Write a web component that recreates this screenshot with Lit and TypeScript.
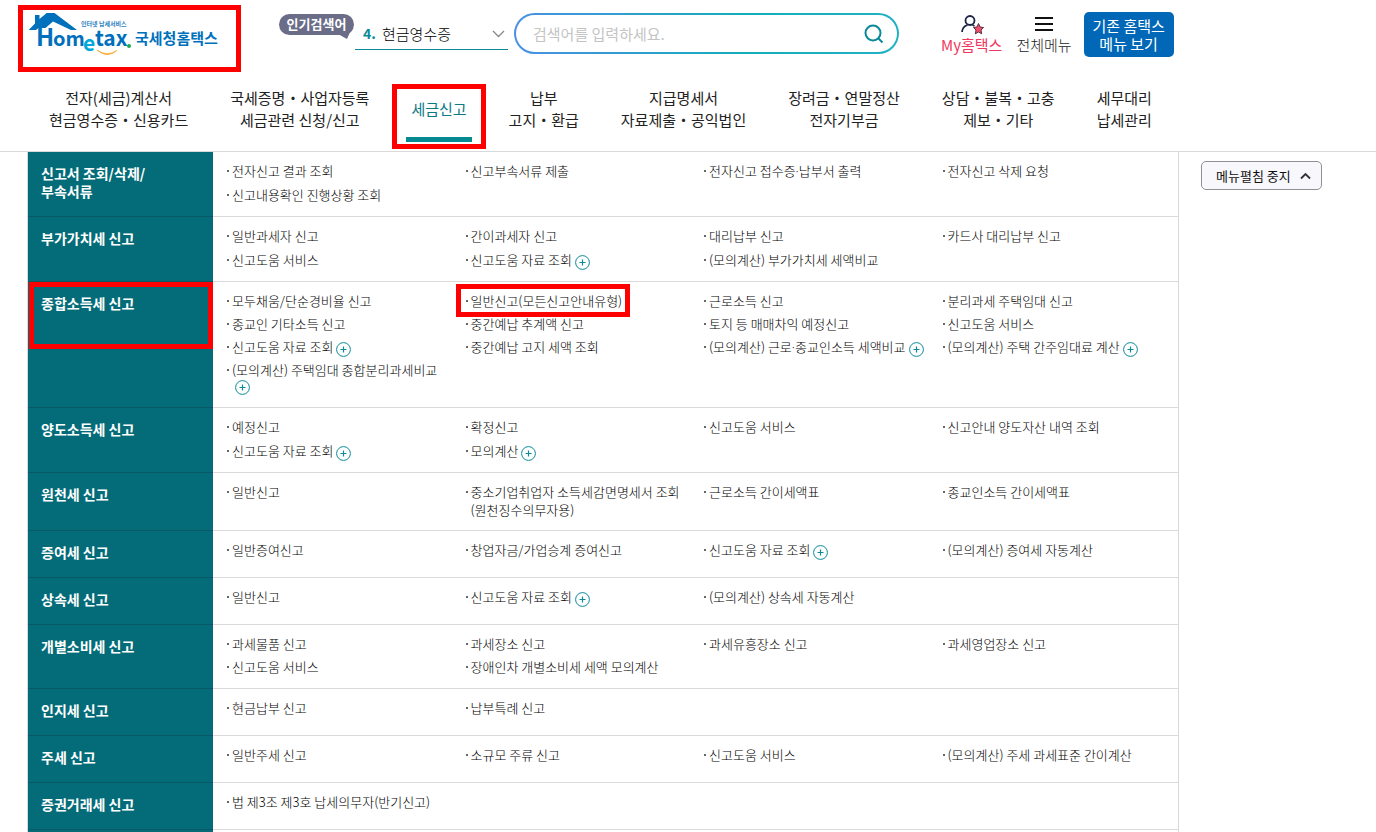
import { LitElement, html, css, nothing } from "lit";
import { customElement } from "lit/decorators.js";
import { classMap } from "lit/directives/class-map.js";

interface Item {
  text: string;
  more?: boolean;
  wrapMore?: boolean;
  marked?: boolean;
}
interface Section {
  title: string[];
  items: Item[];
  dense?: boolean;
  tight?: boolean;
  marked?: boolean;
}

const t = (text: string): Item => ({ text });
const plus = (text: string): Item => ({ text, more: true });

const NAV: { lines: string[]; active?: boolean }[] = [
  { lines: ["전자(세금)계산서", "현금영수증・신용카드"] },
  { lines: ["국세증명・사업자등록", "세금관련 신청/신고"] },
  { lines: ["세금신고"], active: true },
  { lines: ["납부", "고지・환급"] },
  { lines: ["지급명세서", "자료제출・공익법인"] },
  { lines: ["장려금・연말정산", "전자기부금"] },
  { lines: ["상담・불복・고충", "제보・기타"] },
  { lines: ["세무대리", "납세관리"] },
];

const SECTIONS: Section[] = [
  {
    title: ["신고서 조회/삭제/", "부속서류"],
    items: [t("전자신고 결과 조회"), t("신고부속서류 제출"), t("전자신고 접수증·납부서 출력"), t("전자신고 삭제 요청"), t("신고내용확인 진행상황 조회")],
  },
  {
    title: ["부가가치세 신고"],
    items: [t("일반과세자 신고"), t("간이과세자 신고"), t("대리납부 신고"), t("카드사 대리납부 신고"), t("신고도움 서비스"), plus("신고도움 자료 조회"), t("(모의계산) 부가가치세 세액비교")],
  },
  {
    title: ["종합소득세 신고"],
    dense: true,
    marked: true,
    items: [
      t("모두채움/단순경비율 신고"),
      { text: "일반신고(모든신고안내유형)", marked: true },
      t("근로소득 신고"),
      t("분리과세 주택임대 신고"),
      t("종교인 기타소득 신고"),
      t("중간예납 추계액 신고"),
      t("토지 등 매매차익 예정신고"),
      t("신고도움 서비스"),
      plus("신고도움 자료 조회"),
      t("중간예납 고지 세액 조회"),
      plus("(모의계산) 근로·종교인소득 세액비교"),
      plus("(모의계산) 주택 간주임대료 계산"),
      { text: "(모의계산) 주택임대 종합분리과세비교", more: true, wrapMore: true },
    ],
  },
  {
    title: ["양도소득세 신고"],
    items: [t("예정신고"), t("확정신고"), t("신고도움 서비스"), t("신고안내 양도자산 내역 조회"), plus("신고도움 자료 조회"), plus("모의계산")],
  },
  {
    title: ["원천세 신고"],
    tight: true,
    items: [t("일반신고"), t("중소기업취업자 소득세감면명세서 조회(원천징수의무자용)"), t("근로소득 간이세액표"), t("종교인소득 간이세액표")],
  },
  {
    title: ["증여세 신고"],
    items: [t("일반증여신고"), t("창업자금/가업승계 증여신고"), plus("신고도움 자료 조회"), t("(모의계산) 증여세 자동계산")],
  },
  {
    title: ["상속세 신고"],
    items: [t("일반신고"), plus("신고도움 자료 조회"), t("(모의계산) 상속세 자동계산")],
  },
  {
    title: ["개별소비세 신고"],
    dense: true,
    items: [t("과세물품 신고"), t("과세장소 신고"), t("과세유흥장소 신고"), t("과세영업장소 신고"), t("신고도움 서비스"), t("장애인차 개별소비세 세액 모의계산")],
  },
  { title: ["인지세 신고"], items: [t("현금납부 신고"), t("납부특례 신고")] },
  {
    title: ["주세 신고"],
    items: [t("일반주세 신고"), t("소규모 주류 신고"), t("신고도움 서비스"), t("(모의계산) 주세 과세표준 간이계산")],
  },
  { title: ["증권거래세 신고"], items: [t("법 제3조 제3호 납세의무자(반기신고)")] },
];

const base = css`
  * { box-sizing: border-box; }
  a { color: inherit; text-decoration: none; }
  button, input, select { font: inherit; color: inherit; margin: 0; }
  .mark {
    position: absolute;
    border: 5px solid #ff0000;
    pointer-events: none;
  }
`;

@customElement("site-header")
export class SiteHeader extends LitElement {
  static styles = [
    base,
    css`
      :host { display: block; border-bottom: 1px solid #d9d9d9; }
      .top { display: flex; align-items: flex-start; height: 74px; padding-left: 23px; }
      .logo { position: relative; display: block; margin-top: 10px; width: 213px; height: 57px; }
      .logo svg { display: block; }
      .logo .mark { inset: -5px -5px -5px -5px; }
      .badge {
        position: relative;
        margin: 14px 0 0 43px;
        width: 75px;
        height: 21px;
        border-radius: 11px;
        background: #6b6d88;
        color: #fff;
        font-size: 13px;
        line-height: 20px;
        font-weight: 700;
        text-align: center;
      }
      .badge svg { position: absolute; right: 2px; bottom: -4px; }
      .rank {
        display: flex;
        align-items: center;
        position: relative;
        margin: 20px 0 0 1px;
        width: 153px;
        height: 30px;
        padding: 0 0 3px 8px;
        border-bottom: 1px solid #0b8a97;
      }
      .rank .num { width: 19px; font-size: 14px; font-weight: 700; color: #0b8a97; }
      .rank select {
        flex: 1;
        min-width: 0;
        height: 26px;
        padding: 0;
        border: 0;
        background: none;
        appearance: none;
        outline: none;
        font-size: 15px;
        font-weight: 300;
        color: #000;
      }
      .rank svg { position: absolute; right: 3px; top: 10px; pointer-events: none; }
      .search {
        display: flex;
        align-items: center;
        margin: 13px 0 0 6px;
        width: 385px;
        height: 41px;
        padding: 0 13px 0 17px;
        border: 2px solid transparent;
        border-radius: 21px;
        background:
          linear-gradient(#fff, #fff) padding-box,
          linear-gradient(90deg, #4a90e2, #14adbb 60%, #20b2c4) border-box;
      }
      .search input { flex: 1; min-width: 0; border: 0; padding: 0; outline: none; background: none; font-size: 15px; }
      .search input::placeholder { color: #c4c4c4; opacity: 1; }
      .search button { display: block; border: 0; padding: 0; background: none; width: 20px; height: 20px; }
      .search svg { display: block; }
      .quick { display: flex; flex-direction: column; align-items: center; font-size: 15px; line-height: 20px; color: #222; white-space: nowrap; }
      .quick svg { display: block; }
      .my { margin: 14px 0 0 42px; color: #f0385f; }
      .all { margin: 14px 0 0 14px; font-weight: 300; }
      .old {
        margin: 12px 0 0 12px;
        width: 90px;
        height: 45px;
        border: 0;
        border-radius: 5px;
        padding: 0;
        background: #0068b7;
        color: #fff;
        font-size: 15px;
        line-height: 18px;
      }
      .old span { display: block; }
      .nav { display: flex; gap: 42px; padding: 13px 0 0 49px; height: 77px; }
      .nav a {
        position: relative;
        font-size: 15px;
        line-height: 22px;
        color: #222;
        text-align: center;
        white-space: nowrap;
      }
      .nav span { display: block; }
      .nav a.active { padding-top: 11px; color: #0b7a86; }
      .bar { position: absolute; left: -5px; right: -5px; top: 50px; height: 5px; background: #058a94; }
      .nav .mark { inset: -3px -19px 2px -19px; }
    `,
  ];

  render() {
    return html`
      <header>
        <div class="top">
          <a class="logo" href="#" aria-label="국세청홈택스">
            <svg width="208" height="52" viewBox="23 10 208 52" font-family="'Noto Sans CJK KR', sans-serif" font-weight="700">
              <path d="M28.700 30 L35 23.500 V15 H39.500 V19 L46.700 13 H54.500 L77 30 H71 L53 21.500 L45.500 28 H38.500 L36 30 Z" fill="#0070bd" />
              <text x="81" y="26" font-size="6" fill="#2a7fc0">인터넷 납세서비스</text>
              <text x="36" y="46" font-size="24" fill="#0070bd">H</text>
              <text x="53" y="46" font-size="20" fill="#0070bd">om</text>
              <text x="83" y="51" font-size="21" fill="#00a9d8">e</text>
              <text x="95" y="46" font-size="21" fill="#0070bd">tax</text>
              <circle cx="129" cy="46" r="2" fill="#1fab4b" />
              <path d="M97 50 Q107 59 117 50.500 Q107 57 97 50 Z" fill="#f6a623" stroke="#f6a623" stroke-width=".6" />
              <text x="135" y="44" font-size="15" fill="#0070bd">국세청홈택스</text>
            </svg>
            <i class="mark"></i>
          </a>
          <div class="badge">
            인기검색어
            <svg width="14" height="9" viewBox="0 0 14 9"><path d="M0 4 L9 9 L13 0 Z" fill="#6b6d88" /></svg>
          </div>
          <label class="rank">
            <span class="num">4.</span>
            <select aria-label="인기검색어"><option>현금영수증</option></select>
            <svg width="13" height="8" viewBox="0 0 13 8"><path d="M1 1 L6.500 6.500 L12 1" fill="none" stroke="#888" stroke-width="1.300" /></svg>
          </label>
          <div class="search">
            <input type="text" aria-label="검색어" placeholder="검색어를 입력하세요." />
            <button aria-label="검색">
              <svg width="20" height="20" viewBox="0 0 20 20" fill="none" stroke="#0b8a97" stroke-width="2">
                <circle cx="9" cy="9" r="7.500" /><path d="M14 14 L18.500 18.500" />
              </svg>
            </button>
          </div>
          <a class="quick my" href="#">
            <svg width="24" height="21" viewBox="0 0 24 21">
              <circle cx="10" cy="6.500" r="4.500" fill="none" stroke="#1d2547" stroke-width="1.800" />
              <path d="M2 18 Q2.500 12.500 7.500 11 M12.500 11 L14.500 12" fill="none" stroke="#1d2547" stroke-width="1.800" />
              <path d="M18.500 9.500 L20.100 13 L23.500 13.500 L21 16 L21.700 19.800 L18.500 18 L15.300 19.800 L16 16 L13.500 13.500 L16.900 13 Z" fill="#f0506e" stroke="#4a2338" stroke-width=".9" />
            </svg>
            <span>My홈택스</span>
          </a>
          <a class="quick all" href="#">
            <svg width="20" height="21" viewBox="0 0 20 21"><path d="M1 4 H19 M1 10 H19 M1 16 H19" stroke="#111" stroke-width="2" /></svg>
            <span>전체메뉴</span>
          </a>
          <button class="old"><span>기존 홈택스</span><span>메뉴 보기</span></button>
        </div>
        <nav class="nav">
          ${NAV.map(
            (n) => html`<a href="#" class=${classMap({ active: !!n.active })}>
              ${n.lines.map((l) => html`<span>${l}</span>`)}
              ${n.active ? html`<i class="bar"></i><i class="mark"></i>` : nothing}
            </a>`
          )}
        </nav>
      </header>
    `;
  }
}

@customElement("menu-section")
export class MenuSection extends LitElement {
  static properties = { section: { attribute: false } };
  declare section: Section;

  static styles = [
    base,
    css`
      :host { display: grid; grid-template-columns: 185px 1fr; }
      h2 {
        position: relative;
        margin: 0;
        padding: 12px 8px 16px 13px;
        background: #046c79;
        border-bottom: 1px solid #0a5863;
        color: #fff;
        font-size: 14px;
        line-height: 18px;
        font-weight: 700;
      }
      h2 span { display: block; }
      h2 .mark { left: 1px; right: 0; top: 0; height: 67px; }
      ul {
        display: grid;
        grid-template-columns: repeat(3, minmax(0, 159fr)) minmax(0, 157fr);
        row-gap: 6px;
        align-content: start;
        list-style: none;
        margin: 0;
        padding: 10px 0 12px 14px;
        border-bottom: 1px solid #dadada;
        font-size: 13px;
        line-height: 18px;
        font-weight: 300;
        color: #000;
      }
      ul.dense { row-gap: 5px; }
      ul.tight { padding-bottom: 11px; }
      li { display: flex; }
      li::before {
        content: "";
        flex: none;
        width: 2px;
        height: 2px;
        margin: 8px 3px 0 0;
        background: #666;
      }
      a { position: relative; max-width: 216px; height: max-content; }
      .dot { font-family: "Noto Sans", sans-serif; line-height: 1; }
      .more {
        display: inline-block;
        width: 15px;
        height: 15px;
        margin-left: 3px;
        padding: 0;
        border: 0;
        background: none;
        line-height: 0;
      }
      li > .more { margin-top: 4px; margin-bottom: -1px; }
      .body { max-width: 216px; }
      .body .more { display: block; height: 16px; }
      .more svg { display: block; }
      a .mark { inset: -8px -8px -7px -15px; }
    `,
  ];

  private more() {
    return html`<button class="more" aria-label="더보기">
      <svg width="15" height="15" viewBox="0 0 15 15" fill="none" stroke="#0b8a97">
        <circle cx="7.500" cy="7.500" r="6.900" /><path d="M4.500 7.500 H10.500 M7.500 4.500 V10.500" stroke-width="1.200" />
      </svg>
    </button>`;
  }

  private item(i: Item) {
    const parts = i.text.split("·");
    const label = parts.map((p, n) => (n ? html`<span class="dot">·</span>${p}` : p));
    const link = html`<a href="#">${label}${i.marked ? html`<i class="mark"></i>` : nothing}</a>`;
    return i.wrapMore
      ? html`<li><div class="body">${link}${this.more()}</div></li>`
      : html`<li>${link}${i.more ? this.more() : nothing}</li>`;
  }

  render() {
    const s = this.section;
    return html`
      <h2>${s.title.map((l) => html`<span>${l}</span>`)}${s.marked ? html`<i class="mark"></i>` : nothing}</h2>
      <ul class=${classMap({ dense: !!s.dense, tight: !!s.tight })}>${s.items.map((i) => this.item(i))}</ul>
    `;
  }
}

@customElement("app-root")
export class AppRoot extends LitElement {
  static styles = [
    base,
    css`
      :host {
        display: flex;
        flex-direction: column;
        min-height: 100vh;
        background: #fff;
        font-family: "Noto Sans CJK KR", "Noto Sans", sans-serif;
      }
      main { flex: 1; display: flex; align-items: stretch; padding-left: 27px; }
      .panel {
        flex: 1;
        min-width: 0;
        display: flex;
        flex-direction: column;
        border: solid #d9d9d9;
        border-width: 0 1px;
      }
      .rest { flex: 1; width: 185px; background: #046c79; }
      aside { width: 197px; padding: 9px 0 0 22px; }
      .stop {
        display: flex;
        align-items: center;
        gap: 9px;
        height: 29px;
        padding: 0 10px 0 14px;
        border: 1px solid #8e9096;
        border-radius: 5px;
        background: #f7f7fc;
        color: #111;
        font-size: 13px;
        white-space: nowrap;
      }
    `,
  ];

  render() {
    return html`
      <site-header></site-header>
      <main>
        <div class="panel">
          ${SECTIONS.map((s) => html`<menu-section .section=${s}></menu-section>`)}
          <div class="rest"></div>
        </div>
        <aside>
          <button class="stop">
            메뉴펼침 중지
            <svg width="11" height="8" viewBox="0 0 11 8"><path d="M1 6.500 L5.500 2 L10 6.500" fill="none" stroke="#333" stroke-width="1.800" /></svg>
          </button>
        </aside>
      </main>
    `;
  }
}
